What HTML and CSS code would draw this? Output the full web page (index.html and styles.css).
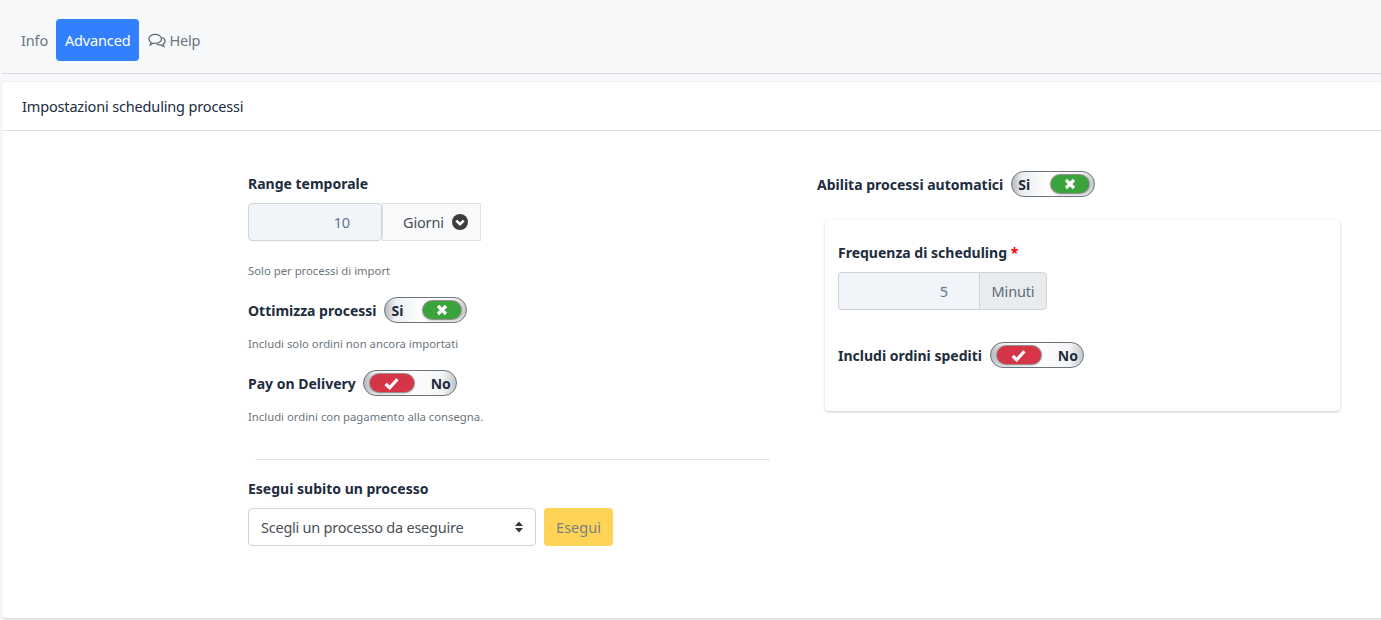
FILE: index.html
```html
<!DOCTYPE html>
<html lang="it">
<head>
<meta charset="utf-8">
<title>Impostazioni scheduling processi</title>
<link rel="stylesheet" href="styles.css">
</head>
<body>
<nav class="tabs">
  <a class="tab info">Info</a>
  <a class="tab active">Advanced</a>
  <a class="tab help"><svg class="chat" viewBox="0 0 20 16" width="18" height="15"><path d="M8 1.200c3.900 0 7 2.200 7 5s-3.100 5-7 5c-.9 0-1.700-.1-2.500-.3L2.500 12.800l.8-2.900C1.900 9 1 7.700 1 6.200c0-2.800 3.100-5 7-5z" fill="none" stroke="currentColor" stroke-width="1.400"/><path d="M15.600 4.700c2 .8 3.400 2.300 3.400 4 0 1.400-.8 2.500-2.100 3.300l.7 2.700-2.900-1.700c-1.800.2-3.900-.4-5-1.300" fill="none" stroke="currentColor" stroke-width="1.400"/></svg>Help</a>
</nav>
<main class="card">
  <header class="card-header">Impostazioni scheduling processi</header>
  <div class="card-body">
    <section class="col-left">
      <label class="label">Range temporale</label>
      <div class="group">
        <div class="input range-input">10</div>
        <div class="unit-select">Giorni<svg class="chev" viewBox="0 0 16 16" width="16" height="16"><circle cx="8" cy="8" r="8" fill="#3d3d3d"/><path d="M4.300 6.600 8 10.200l3.700-3.600" fill="none" stroke="#fff" stroke-width="2.600"/></svg></div>
      </div>
      <p class="hint first-hint">Solo per processi di import</p>
      <div class="toggle-row">
        <span class="label inline">Ottimizza processi</span>
        <span class="toggle on"><span class="tog-text">Si</span><span class="knob green"><svg viewBox="0 0 12 12" width="12" height="12"><path d="M2 2l8 8M10 2l-8 8" stroke="#fff" stroke-width="3.200"/></svg></span></span>
      </div>
      <p class="hint">Includi solo ordini non ancora importati</p>
      <div class="toggle-row">
        <span class="label inline tight">Pay on Delivery</span>
        <span class="toggle off"><span class="knob red"><svg viewBox="0 0 14 12" width="15" height="13"><path d="M1.500 6.500l3.800 3.500 7.200-8" fill="none" stroke="#fff" stroke-width="3"/></svg></span><span class="tog-text">No</span></span>
      </div>
      <p class="hint">Includi ordini con pagamento alla consegna.</p>
      <hr class="divider">
      <label class="label">Esegui subito un processo</label>
      <div class="run-row">
        <div class="select">Scegli un processo da eseguire<svg class="updown" viewBox="0 0 8 12" width="8" height="12"><path d="M4 .5 8 5H0zM4 11.500 0 7h8z" fill="#343a40"/></svg></div>
        <button class="run">Esegui</button>
      </div>
    </section>
    <section class="col-right">
      <div class="toggle-row top-toggle">
        <span class="label inline">Abilita processi automatici</span>
        <span class="toggle on wide"><span class="tog-text">Si</span><span class="knob green"><svg viewBox="0 0 12 12" width="12" height="12"><path d="M2 2l8 8M10 2l-8 8" stroke="#fff" stroke-width="3.200"/></svg></span></span>
      </div>
      <div class="panel">
        <label class="label">Frequenza di scheduling <span class="req">*</span></label>
        <div class="group">
          <div class="input freq-input">5</div>
          <div class="addon">Minuti</div>
        </div>
        <div class="toggle-row panel-toggle">
          <span class="label inline">Includi ordini spediti</span>
          <span class="toggle off"><span class="knob red"><svg viewBox="0 0 14 12" width="15" height="13"><path d="M1.500 6.500l3.800 3.500 7.200-8" fill="none" stroke="#fff" stroke-width="3"/></svg></span><span class="tog-text">No</span></span>
        </div>
      </div>
    </section>
  </div>
</main>
</body>
</html>
```

FILE: styles.css
```css
* { box-sizing: border-box; }
html, body { margin: 0; height: 100%; }
body {
  background: #f7f8fa;
  color: #212c3d;
  font-family: "Noto Sans", "Open Sans", sans-serif;
  font-size: 14.500px;
  letter-spacing: -0.16px;
  overflow: hidden;
  padding-left: 2px;
}
.tabs {
  display: flex;
  height: 74px;
  padding: 19px 0 0 10px;
  border-bottom: 1px solid #d9dbde;
}
.tab {
  height: 42px;
  line-height: 42px;
  padding: 0 9px;
  color: #6c757d;
  border-radius: 4px;
  white-space: nowrap;
}
.tab.info { padding-right: 8px; }
.tab.active { background: #3380ff; color: #fff; }
.help { display: flex; align-items: center; gap: 3px; }
.chat { color: #5f6972; }
.card {
  margin-top: 8px;
  height: 537px;
  background: #fff;
  border-radius: 4px 0 0 4px;
  border-bottom: 1px solid #d9dbde;
  box-shadow: 0 0 2px rgba(0,0,0,.12);
}
.card-header {
  height: 49px;
  line-height: 48px;
  padding-left: 20px;
  border-bottom: 1px solid #dfe1e4;
}
.card-body {
  display: flex;
  padding: 40px 0 0 246px;
}
.col-left { width: 569px; }
.label {
  display: block;
  font-weight: 700;
  line-height: 26px;
  font-size: 14px;
  letter-spacing: 0;
}
.label.inline { display: inline; margin-right: 7px; padding-top: 2px; }
.label.inline.tight { margin-right: 6px; }
.group { display: flex; margin-top: 6px; }
.input {
  height: 38px;
  line-height: 36px;
  text-align: right;
  background: #f1f4f8;
  border: 1px solid #ced4da;
  border-radius: 4px;
  color: #5f7690;
}
.range-input { width: 134px; padding-right: 31px; }
.unit-select {
  width: 99px;
  height: 38px;
  display: flex;
  align-items: center;
  padding-left: 20px;
  gap: 8px;
  background: #f8f9fa;
  border: 1px solid #dee2e6;
  color: #495057;
}
.hint {
  margin: 0;
  font-size: 11.300px;
  letter-spacing: 0;
  line-height: 16px;
  color: #6c757d;
}
.first-hint { margin-top: 22px; }
.toggle-row { display: flex; align-items: center; height: 26px; margin-top: 18px; }
.toggle-row + .hint { margin-top: 13px; }
.toggle {
  display: flex;
  align-items: center;
  justify-content: space-between;
  height: 26px;
  margin-left: 1px;
  padding: 0 5px 0 6px;
  border: 1px solid #6c757d;
  border-radius: 13px;
  font-weight: 700;
  font-size: 14px;
  letter-spacing: 0;
  background: linear-gradient(90deg, #b4b8bc 0, #eceef0 12%, #ffffff 45%, #f4f5f6 85%, #c4c7ca 100%);
}
.toggle.on { width: 83px; }
.toggle.on.wide { width: 84px; }
.toggle.off { width: 94px; }
.knob {
  display: flex;
  align-items: center;
  justify-content: center;
  height: 18px;
  border-radius: 9px;
  box-shadow: 0 0 0 1px #9a8f90, 0 1px 3px rgba(0,0,0,.35);
}
.green { width: 38px; background: #3ba33b; }
.red { width: 44px; background: #d63447; }
.divider { margin: 34px 0 16px 7px; width: 515px; border: 0; border-top: 1px solid #e2e4e7; }
.run-row { display: flex; gap: 8px; margin-top: 6px; }
.select {
  width: 288px;
  height: 38px;
  display: flex;
  align-items: center;
  justify-content: space-between;
  padding: 0 12px;
  background: #fff;
  border: 1px solid #ced4da;
  border-radius: 4px;
  color: #495057;
  letter-spacing: -0.24px;
}
.run {
  width: 69px;
  height: 38px;
  background: #fdd456;
  color: #7c7f84;
  border: 0;
  border-radius: 4px;
  font: inherit;
}
.col-right { width: 525px; }
.top-toggle { margin-top: 0; }
.panel {
  margin: 23px 0 0 8px;
  width: 515px;
  height: 191px;
  padding: 20px 13px;
  background: #fff;
  border-radius: 4px;
  box-shadow: 0 1px 3px rgba(0,0,0,.22);
}
.req { color: #f00; }
.freq-input { width: 141px; padding-right: 31px; border-radius: 4px 0 0 4px; border-right: 0; }
.addon {
  width: 68px;
  height: 38px;
  line-height: 36px;
  text-align: center;
  background: #e9ecef;
  border: 1px solid #ced4da;
  border-radius: 0 4px 4px 0;
  color: #5f6b76;
}
.panel-toggle { margin-top: 32px; }
```
